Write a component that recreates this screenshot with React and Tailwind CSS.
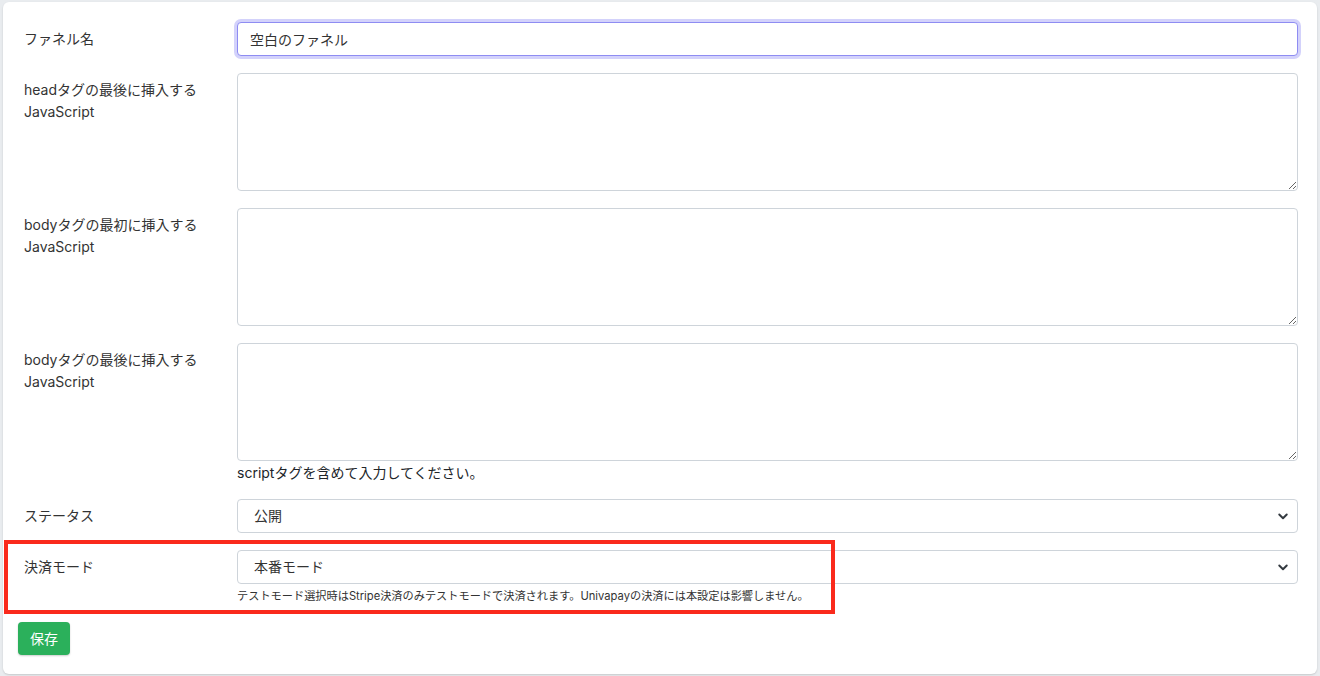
import React, { useState } from 'react';

const Chevron = () => (
  <svg
    className="pointer-events-none absolute right-[9px] top-1/2 -translate-y-1/2 text-[#343a40]"
    width="12"
    height="12"
    viewBox="0 0 16 16"
    fill="none"
    stroke="currentColor"
    strokeWidth="2.6"
    strokeLinecap="round"
    strokeLinejoin="round"
  >
    <path d="M3 6l5 5 5-5" />
  </svg>
);

const Row = ({ label, children, className = '' }) => (
  <div className={`flex pl-[6px] ${className}`}>
    <label className="w-[213px] shrink-0 pt-[6px] text-sm leading-[22px] text-[#333]">{label}</label>
    <div className="flex-1 min-w-0">{children}</div>
  </div>
);

const textareaCls =
  'block w-full h-[118px] rounded-[4px] border border-[#ced4da] bg-white px-3 py-2 text-sm text-[#333] focus:outline-none';

const selectCls =
  'block w-full h-[34px] appearance-none rounded-[4px] border border-[#ced4da] bg-white pl-4 pr-9 text-sm text-[#333] focus:outline-none';

const App = () => {
  const [name, setName] = useState('空白のファネル');
  const [status, setStatus] = useState('public');
  const [mode, setMode] = useState('live');

  return (
    <div
      className="min-h-screen bg-[#e9ecef] pt-[2px]"
      style={{ fontFamily: 'Inter, "Noto Sans CJK JP", sans-serif' }}
    >
      <div className="relative mx-[3px] h-[672px] rounded-md bg-white pl-[15px] pr-[19px] pt-5 shadow-[0_1px_2px_rgba(0,0,0,0.15)]">
        <Row label="ファネル名" className="mb-[17px]">
          <input
            value={name}
            onChange={(e) => setName(e.target.value)}
            className="block w-full h-[34px] rounded-[4px] border border-[#8e8cf2] bg-white px-3 text-sm text-[#333] outline-none ring-[3px] ring-[#d3d2fb]"
          />
        </Row>

        <Row label={<>headタグの最後に挿入する<br />JavaScript</>} className="mb-[17px]">
          <textarea className={textareaCls} />
        </Row>

        <Row label={<>bodyタグの最初に挿入する<br />JavaScript</>} className="mb-[17px]">
          <textarea className={textareaCls} />
        </Row>

        <Row label={<>bodyタグの最後に挿入する<br />JavaScript</>} className="mb-[16px]">
          <textarea className={textareaCls} />
          <p className="mt-[1px] text-sm leading-[21px] text-[#212529]">scriptタグを含めて入力してください。</p>
        </Row>

        <Row label="ステータス" className="mb-[17px]">
          <div className="relative">
            <select value={status} onChange={(e) => setStatus(e.target.value)} className={selectCls}>
              <option value="public">公開</option>
              <option value="private">非公開</option>
            </select>
            <Chevron />
          </div>
        </Row>

        <Row label="決済モード">
          <div className="relative">
            <select value={mode} onChange={(e) => setMode(e.target.value)} className={selectCls}>
              <option value="live">本番モード</option>
              <option value="test">テストモード</option>
            </select>
            <Chevron />
          </div>
          <p className="mt-[5px] text-[11.2px] leading-[15px] text-[#333]">
            テストモード選択時はStripe決済のみテストモードで決済されます。Univapayの決済には本設定は影響しません。
          </p>
        </Row>

        <button className="mt-[18px] h-[33px] w-[52px] rounded-[4px] bg-[#2bb05b] text-sm text-white shadow-[0_1px_2px_rgba(0,0,0,0.2)]">
          保存
        </button>

        {/* annotation frame */}
        <div className="pointer-events-none absolute left-[1px] top-[538px] h-[74px] w-[831px] border-4 border-[#fa2a1c]" />
      </div>
    </div>
  );
};

export default App;
